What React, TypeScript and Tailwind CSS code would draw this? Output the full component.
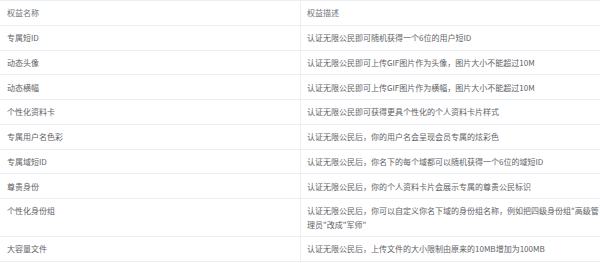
const rows: [string, string, string?][] = [
  ["专属短ID", "认证无限公民即可随机获得一个6位的用户短ID"],
  ["动态头像", "认证无限公民即可上传GIF图片作为头像，图片大小不能超过10M"],
  ["动态横幅", "认证无限公民即可上传GIF图片作为横幅，图片大小不能超过10M"],
  ["个性化资料卡", "认证无限公民即可获得更具个性化的个人资料卡片样式"],
  ["专属用户名色彩", "认证无限公民后，你的用户名会呈现会员专属的炫彩色"],
  ["专属域短ID", "认证无限公民后，你名下的每个域都可以随机获得一个6位的域短ID"],
  ["尊贵身份", "认证无限公民后，你的个人资料卡片会展示专属的尊贵公民标识"],
  ["个性化身份组", "认证无限公民后，你可以自定义你名下域的身份组名称，例如把四级身份组\"高级管", "理员\"改成\"军师\""],
  ["大容量文件", "认证无限公民后，上传文件的大小限制由原来的10MB增加为100MB"],
];

export default function App() {
  return (
    <div className="w-[600px] bg-white font-['Noto_Sans_CJK_SC','Noto_Sans',sans-serif] text-[8px] leading-[13.25px] text-[#606266]">
      <div className="border-t border-[#ebeef5]">
        <div className="grid grid-cols-[300px_300px] border-b border-[#ebeef5]">
          <div className="py-[5.25px] pl-[7px] pr-[6px] text-[#707379]">权益名称</div>
          <div className="border-l border-[#ebeef5] py-[5.25px] pl-[6px] pr-[6px] text-[#707379]">权益描述</div>
        </div>
        {rows.map(([name, desc, rest]) => (
          <div key={name} className="grid grid-cols-[300px_300px] border-b border-[#ebeef5]">
            <div className="py-[5.25px] pl-[7px] pr-[6px]">{name}</div>
            <div className="border-l border-[#ebeef5] py-[5.25px] pl-[6px] pr-0">
              <span className="whitespace-nowrap">{desc}</span>
              {rest && (
                <>
                  <br />
                  {rest}
                </>
              )}
            </div>
          </div>
        ))}
      </div>
    </div>
  );
}
